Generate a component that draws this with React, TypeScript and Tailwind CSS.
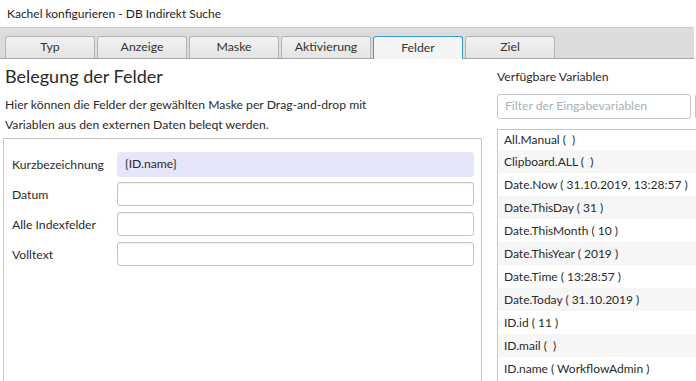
import React from "react";

const tabs = ["Typ", "Anzeige", "Maske", "Aktivierung", "Felder", "Ziel"];
const vars = [
  "All.Manual (\u00a0\u00a0)",
  "Clipboard.ALL (\u00a0\u00a0)",
  "Date.Now ( 31.10.2019, 13:28:57 )",
  "Date.ThisDay ( 31 )",
  "Date.ThisMonth ( 10 )",
  "Date.ThisYear ( 2019 )",
  "Date.Time ( 13:28:57 )",
  "Date.Today ( 31.10.2019 )",
  "ID.id ( 11 )",
  "ID.mail (\u00a0\u00a0)",
  "ID.name ( WorkflowAdmin )",
];
const fields = [
  { label: "Kurzbezeichnung", value: "{ID.name}", filled: true },
  { label: "Datum", value: "", filled: false },
  { label: "Alle Indexfelder", value: "", filled: false },
  { label: "Volltext", value: "", filled: false },
];

export default function App() {
  return (
    <div
      className="w-[696px] h-[381px] overflow-hidden bg-white text-[#262626] flex flex-col"
      style={{ fontFamily: "Lato, 'Noto Sans', sans-serif" }}
    >
      <div className="h-[27px] shrink-0 pl-[7px] flex items-center text-[12px] text-[#1e1e1e]">
        Kachel konfigurieren - DB Indirekt Suche
      </div>
      <div className="h-[32px] shrink-0 mr-[2px] bg-[#dcdcdc] border-t border-[#cdcdcd] border-b border-b-[#a6a6a6] flex items-end pl-[5px] gap-[2px]">
        {tabs.map((t) => {
          const sel = t === "Felder";
          return (
            <div
              key={t}
              className={
                sel
                  ? "w-[90px] h-[23px] -mb-px rounded-t-[3px] border border-b-0 border-[#3a9bd0] bg-[#f4f4f4] flex items-center justify-center text-[12.3px] text-[#333]"
                  : "w-[90px] h-[22px] rounded-t-[3px] border border-b-0 border-[#b4b4b4] bg-gradient-to-b from-[#f2f2f2] to-[#e4e4e4] flex items-center justify-center text-[12.3px] text-[#333]"
              }
            >
              {t}
            </div>
          );
        })}
      </div>
      <div className="flex flex-1 min-h-0">
        <div className="w-[482px] shrink-0 pl-[3px] flex flex-col">
          <div className="mt-[5px] pl-[2px] h-[24px] leading-[24px] text-[18px] text-[#2a2a2a]">
            Belegung der Felder
          </div>
          <div className="mt-[7px] pl-[2px] text-[12.2px] leading-[20px] text-[#2a2a2a]">
            Hier können die Felder der gewählten Maske per Drag-and-drop mit
            <br />
            Variablen aus den externen Daten beleqt werden.
          </div>
          <div className="mt-[3px] flex-1 border border-b-0 border-[#c6c6c6] pt-[13px] pl-[8px] pr-[7px] flex flex-col gap-[6px]">
            {fields.map((f) => (
              <div key={f.label} className="flex items-center h-[24px]">
                <div className="w-[105px] shrink-0 pt-[2px] text-[12.2px] text-[#2a2a2a]">{f.label}</div>
                <div
                  className={
                    f.filled
                      ? "flex-1 h-[25px] rounded-[3px] bg-[#e6e6fa] border border-[#e6e6fa] flex items-center pl-[7px] text-[12.2px] text-[#2a2a2a]"
                      : "flex-1 h-[24px] rounded-[3px] bg-white border border-[#c4c4c4] shadow-[inset_0_1px_1px_rgba(0,0,0,0.06)]"
                  }
                >
                  {f.value}
                </div>
              </div>
            ))}
          </div>
        </div>
        <div className="flex-1 pl-[15px] flex flex-col min-w-0">
          <div className="mt-[6px] h-[24px] leading-[24px] text-[12.2px] text-[#2a2a2a]">
            Verfügbare Variablen
          </div>
          <div className="mt-[5px] flex items-center gap-[4px]">
            <div className="w-[194px] h-[25px] rounded-[3px] border border-[#c4c4c4] flex items-center pl-[7px] text-[12.2px] text-[#a8b0b8] shrink-0">
              Filter der Eingabevariablen
            </div>
            <div className="w-[10px] h-[25px] rounded-l-[3px] border border-r-0 border-[#c4c4c4] shrink-0" />
          </div>
          <div className="mt-[10px] flex-1 border-l border-t border-[#c6c6c6] flex flex-col">
            {vars.map((v, i) => (
              <div
                key={v}
                className={
                  (i === 0 ? "h-[20px] " : "h-[23px] ") +
                  (i % 2 === 1 ? "bg-[#f6f6f6] " : "bg-white ") +
                  "shrink-0 flex items-center pl-[6px] text-[12px] text-[#2a2a2a] whitespace-nowrap"
                }
              >
                {v}
              </div>
            ))}
          </div>
        </div>
      </div>
    </div>
  );
}
